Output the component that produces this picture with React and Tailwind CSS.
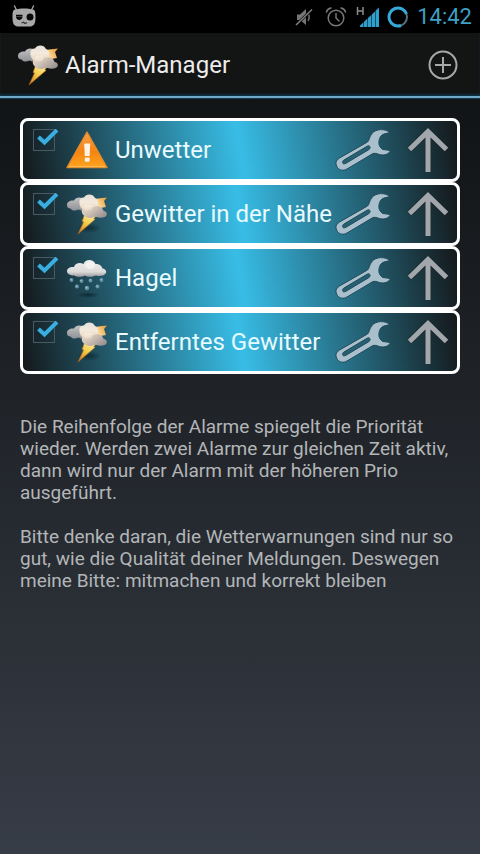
import React, { useState } from "react";

const initialAlarms = [
  { id: "storm", title: "Unwetter", icon: "warning", active: true },
  { id: "near", title: "Gewitter in der Nähe", icon: "thunder", active: true },
  { id: "hail", title: "Hagel", icon: "hail", active: true },
  { id: "far", title: "Entferntes Gewitter", icon: "thunder", active: true },
];

const WarningIcon = () => (
  <svg viewBox="0 0 42 40" className="w-full" aria-hidden="true">
    <defs>
      <linearGradient id="warnFill" x1="0" y1="0" x2="0" y2="1">
        <stop offset="0" stopColor="#f9a04a" />
        <stop offset="0.55" stopColor="#f58412" />
        <stop offset="1" stopColor="#ffa41f" />
      </linearGradient>
    </defs>
    <path
      d="M21 2 L41 37.5 H1 Z"
      fill="url(#warnFill)"
      stroke="#e08a2c"
      strokeWidth="1.4"
      strokeLinejoin="round"
    />
    <path d="M3 36.6 H39" stroke="#ffc05a" strokeWidth="1" />
    <path d="M18.2 13.5 H24.2 L23.6 26 H18.8 Z" fill="#fff3e6" />
    <rect x="18.8" y="27.5" width="4.8" height="4.2" rx="1" fill="#fff3e6" />
  </svg>
);

const ThunderIcon = () => (
  <svg viewBox="0 0 42 42" className="w-full" aria-hidden="true">
    <defs>
      <linearGradient id="boltFill" x1="0.8" y1="0" x2="0.2" y2="1">
        <stop offset="0" stopColor="#ffefb5" />
        <stop offset="0.5" stopColor="#f6d04f" />
        <stop offset="1" stopColor="#d9831f" />
      </linearGradient>
      <linearGradient id="cloudBack" x1="0" y1="0" x2="0" y2="1">
        <stop offset="0" stopColor="#c3c2c2" />
        <stop offset="1" stopColor="#8f9196" />
      </linearGradient>
      <linearGradient id="cloudTop" x1="0" y1="0" x2="0" y2="1">
        <stop offset="0" stopColor="#e4e0dc" />
        <stop offset="0.5" stopColor="#f5eadb" />
        <stop offset="1" stopColor="#e5d3c0" />
      </linearGradient>
      <linearGradient id="cloudLow" x1="0" y1="0" x2="1" y2="0.6">
        <stop offset="0" stopColor="#eedcc6" />
        <stop offset="0.5" stopColor="#cdbfb4" />
        <stop offset="1" stopColor="#9c9595" />
      </linearGradient>
      <linearGradient id="spark" x1="0" y1="0.5" x2="1" y2="0">
        <stop offset="0" stopColor="#ffedbf" />
        <stop offset="1" stopColor="#ea9228" />
      </linearGradient>
      <radialGradient id="boltShadow">
        <stop offset="0" stopColor="#0a1c22" stopOpacity="0.6" />
        <stop offset="1" stopColor="#0a1c22" stopOpacity="0" />
      </radialGradient>
    </defs>
    <ellipse cx="23" cy="35" rx="13" ry="5" fill="url(#boltShadow)" />
    <path d="M28 6 L41 4.5 L38 8 L40 14 L29 16 Z" fill="url(#spark)" />
    <path
      d="M1 12 C1 8.5 4.500 7 8 7.500 C10 4 14 4 17 5.500 L24 14 C20 18 15 18 12.500 16.500 C9 18.500 5.500 17.500 4.500 15.500 C2 15.500 1 14 1 12 Z"
      fill="url(#cloudBack)"
    />
    <path
      d="M19 20 L16 28.500 L17.500 29 L12 41 L29 26.500 L28 25.500 L33 20 Z"
      fill="url(#boltFill)"
      stroke="#a8641f"
      strokeWidth="0.6"
    />
    <path
      d="M13.500 10 C13 6.500 15 4.500 18 4.500 C20 0.500 27 0.500 29 5 C32 6 33 10 31.500 12.500 L28 17 H18 C15 16 13.500 13 13.500 10 Z"
      fill="url(#cloudTop)"
    />
    <path
      d="M17 15.500 C21 13.500 26 15 28 14 C32 12 37 14.500 37.500 18 C41 18.500 42 22 39.500 23.500 C36 25.500 31 24.500 29.500 23.500 C26 25.500 20 25.500 18 22.500 C15.500 20.500 15 17.500 17 15.500 Z"
      fill="url(#cloudLow)"
    />
    <ellipse cx="22" cy="14.500" rx="4.500" ry="3" fill="#fbf1e2" opacity="0.5" />
  </svg>
);

const HailIcon = () => (
  <svg viewBox="0 0 42 42" className="w-full" aria-hidden="true">
    <defs>
      <linearGradient id="hailCloud" x1="0" y1="0" x2="0" y2="1">
        <stop offset="0" stopColor="#ededed" />
        <stop offset="0.7" stopColor="#dddbda" />
        <stop offset="1" stopColor="#9a9b9d" />
      </linearGradient>
      <radialGradient id="hailShadow">
        <stop offset="0" stopColor="#0b2730" stopOpacity="0.9" />
        <stop offset="1" stopColor="#0b2730" stopOpacity="0" />
      </radialGradient>
    </defs>
    <ellipse cx="22" cy="38" rx="12" ry="3" fill="url(#hailShadow)" />
    <path
      d="M1 14 C1 11 5 9.500 8 10 C9 6 14 5 17.500 7 C19 1.500 27.500 1.500 29.500 7 C33 6.500 36 9 36.500 11.500 C40.500 12 41.500 16 38.500 17.500 C36 19.500 31 19 29.500 18.500 C26 20.500 21 20 19 18.500 C15.500 20.500 10 20 8.500 18.500 C4 18.500 1 17 1 14 Z"
      fill="url(#hailCloud)"
    />
    <ellipse cx="24" cy="8.500" rx="5" ry="3.500" fill="#fff" opacity="0.5" />
    <g fill="#6392a8">
      <circle cx="5.500" cy="23" r="1.900" />
      <circle cx="15.500" cy="24" r="1.900" />
      <circle cx="24.500" cy="23.500" r="1.900" />
      <circle cx="35.500" cy="23" r="1.900" />
      <circle cx="11" cy="29.500" r="2" />
      <circle cx="21" cy="31" r="2.200" />
      <circle cx="31.500" cy="29.500" r="2" />
    </g>
    <g fill="#a3c3d1">
      <circle cx="5" cy="22.500" r="0.700" />
      <circle cx="15" cy="23.500" r="0.700" />
      <circle cx="24" cy="23" r="0.700" />
      <circle cx="35" cy="22.500" r="0.700" />
      <circle cx="10.500" cy="29" r="0.800" />
      <circle cx="20.500" cy="30.500" r="0.900" />
      <circle cx="31" cy="29" r="0.800" />
    </g>
  </svg>
);

const WrenchIcon = () => (
  <svg viewBox="0 0 56 44" className="w-full" aria-hidden="true">
    <path
      d="M55 4.500 C50 0.500 41 0.500 37 5.500 C34 9 34.500 12.500 32.500 14 L4.500 30 C0.500 32.500 0 36 2.500 39.500 C4.500 42.500 8.500 43 12 41 L38 25.500 C41 24.500 43.500 27 47.500 27 C51.500 27 54.500 25 55.500 22.500 L48 21.500 C44.500 19.500 43.500 16.500 44 13 C44.500 9 46.500 6.500 49 6 Z"
      fill="#a9bfcb"
      stroke="#1f4a5b"
      strokeWidth="1"
      strokeLinejoin="round"
    />
    <path
      d="M32.500 18 L9 32 C6.500 33.500 7.500 37 10.500 35.500 L34 21.500 C36 20 35 17 32.500 18 Z"
      fill="#286073"
      stroke="#1d4757"
      strokeWidth="1"
    />
  </svg>
);

const ArrowUpIcon = () => (
  <svg viewBox="0 0 42 46" className="w-full" aria-hidden="true">
    <g fill="none" strokeLinejoin="miter">
      <path
        d="M21 45 V5 M2 23 L21 4.500 L40 23"
        stroke="#20282c"
        strokeWidth="7"
        opacity="0.5"
      />
      <path
        d="M21 45 V5 M2.500 22.500 L21 4.500 L39.500 22.500"
        stroke="#a1a7aa"
        strokeWidth="5"
      />
    </g>
  </svg>
);

const alarmIcons = {
  warning: WarningIcon,
  thunder: ThunderIcon,
  hail: HailIcon,
};

const StatusBar = () => (
  <div className="flex h-[33px] items-center bg-black pl-3 pr-2">
    <svg viewBox="0 0 24 24" className="h-6 w-6" aria-hidden="true">
      <path
        d="M2.500 1 L4.500 5 M21.500 1 L19.500 5"
        stroke="#9b9b9b"
        strokeWidth="1.500"
        strokeLinecap="round"
      />
      <path
        d="M3 4.500 C8 3 16 3 21 4.500 C23 5 23.500 7 23.500 12 C23.500 19 22 21.500 17 21.500 H7 C2 21.500 0.500 19 0.500 12 C0.500 7 1 5 3 4.500 Z"
        fill="#a9a9a9"
      />
      <path d="M4 11.500 H10.500 C10.500 16 4 16 4 11.500 Z" fill="#0a0a0a" />
      <path d="M4 10.500 H10.500" stroke="#0a0a0a" strokeWidth="1.500" />
      <circle cx="18" cy="12" r="3.500" fill="#0a0a0a" />
      <path
        d="M9.500 18 L11.500 17.300 L13 18.500 L15 17.500"
        stroke="#333"
        strokeWidth="1.200"
        fill="none"
      />
    </svg>

    <div className="ml-auto flex items-center gap-3">
      <svg viewBox="0 0 18 20" className="h-5 w-[18px]" aria-hidden="true">
        <path d="M2 7.500 H5 L11 2 V18 L5 13 H2 Z" fill="#757575" />
        <path
          d="M13 6.500 C14.500 8 14.500 12 13 14"
          stroke="#757575"
          strokeWidth="1.500"
          fill="none"
        />
        <path d="M16.500 3 L1 18" stroke="#000" strokeWidth="2.500" />
        <path d="M17 2.500 L1 18" stroke="#808080" strokeWidth="1.500" />
      </svg>
      <div className="flex items-center gap-2">
        <svg
          viewBox="0 0 22 22"
          className="h-[22px] w-[22px]"
          fill="none"
          stroke="#777"
          strokeWidth="1.500"
          strokeLinecap="round"
          aria-hidden="true"
        >
          <circle cx="11" cy="12" r="7.800" />
          <path d="M11 7.500 V12 L14 15" />
          <path d="M1.500 6 C2 4 3.500 2.500 6 2 M20.500 6 C20 4 18.500 2.500 16 2" />
        </svg>
        <svg viewBox="0 0 24 22" className="h-[22px] w-6" aria-hidden="true">
          <path
            d="M2.500 1 V9 M8 1 V9 M2.500 5 H8"
            stroke="#8a8a8a"
            strokeWidth="1.500"
            fill="none"
          />
          <g fill="#2f9fcb">
            <path d="M5 21 V19.500 L8.500 16.300 V21 Z" />
            <path d="M9 21 V15.800 L12.500 12.600 V21 Z" />
            <path d="M13 21 V12 L16.500 8.800 V21 Z" />
            <path d="M17 21 V8.200 L20 5.400 V21 Z" />
            <path d="M20.500 21 V4.800 L24 1.500 V21 Z" />
          </g>
        </svg>
        <svg
          viewBox="0 0 22 22"
          className="h-[22px] w-[22px]"
          fill="none"
          aria-hidden="true"
        >
          <circle cx="11" cy="11" r="9" stroke="#56707c" strokeWidth="2" />
          <path
            d="M14 19.500 A9 9 0 1 1 19.500 8"
            stroke="#35a9d8"
            strokeWidth="3"
          />
        </svg>
        <time className="text-[22px] leading-6 text-[#3f9fc4]">14:42</time>
      </div>
    </div>
  </div>
);

const AlarmRow = ({ alarm, onToggle, onMoveUp }) => {
  const Icon = alarmIcons[alarm.icon];

  return (
    <li className="flex h-16 items-center rounded-lg border-3 border-white bg-[linear-gradient(80deg,#14181a,#38bde6_50%,#14181a)] pl-[10px] pr-2">
      <div className="relative mt-2 h-[22px] w-[22px] shrink-0 self-start">
        <input
          id={alarm.id}
          type="checkbox"
          checked={alarm.active}
          onChange={() => onToggle(alarm.id)}
          className="peer block h-full w-full appearance-none border border-[#4a5a62]"
        />
        <svg
          viewBox="0 0 24 18"
          className="pointer-events-none absolute left-0.5 top-0 hidden w-6 peer-checked:block"
          fill="none"
          aria-hidden="true"
        >
          <path d="M3.500 8 L9.500 13.500 L22 1" stroke="#38afe0" strokeWidth="4" />
        </svg>
      </div>
      <label htmlFor={alarm.id} className="flex min-w-0 flex-1 items-center">
        <span className="ml-[11px] w-[42px] shrink-0">
          <Icon />
        </span>
        <span className="ml-[7px] whitespace-nowrap text-2xl text-[#e8fbff]">
          {alarm.title}
        </span>
      </label>
      <button
        type="button"
        aria-label={`${alarm.title} bearbeiten`}
        className="w-14 shrink-0"
      >
        <WrenchIcon />
      </button>
      <button
        type="button"
        aria-label={`${alarm.title} nach oben`}
        onClick={() => onMoveUp(alarm.id)}
        className="ml-4 w-[42px] shrink-0"
      >
        <ArrowUpIcon />
      </button>
    </li>
  );
};

const App = () => {
  const [alarms, setAlarms] = useState(initialAlarms);

  const onToggle = (id) => {
    setAlarms((prev) =>
      prev.map((a) => (a.id === id ? { ...a, active: !a.active } : a)),
    );
  };

  const onMoveUp = (id) => {
    setAlarms((prev) => {
      const ind = prev.findIndex((a) => a.id === id);
      if (ind < 1) return prev;
      const updated = [...prev];
      [updated[ind - 1], updated[ind]] = [updated[ind], updated[ind - 1]];
      return updated;
    });
  };

  return (
    <div className="flex min-h-screen flex-col bg-linear-to-b from-[#0d0f10] to-[#373d47] font-[Roboto,sans-serif]">
      <StatusBar />

      <header className="flex h-[65px] items-center border-b-2 border-[#6fa9c6] bg-[#131414] pl-[17px] pr-[22px] shadow-[0_1px_1px_#12384a,inset_0_-2px_2px_#0d3040]">
        <div className="w-[42px]">
          <ThunderIcon />
        </div>
        <h1 className="ml-1.5 text-2xl text-[#ececec]">Alarm-Manager</h1>
        <button
          type="button"
          aria-label="Alarm hinzufügen"
          className="ml-auto w-[30px]"
        >
          <svg
            viewBox="0 0 30 30"
            className="w-full"
            fill="none"
            stroke="#a8a8a8"
            strokeWidth="2"
            aria-hidden="true"
          >
            <circle cx="15" cy="15" r="13.500" />
            <path d="M15 7 V23 M7 15 H23" />
          </svg>
        </button>
      </header>

      <main className="px-5 pt-5">
        <ul>
          {alarms.map((alarm) => (
            <AlarmRow
              key={alarm.id}
              alarm={alarm}
              onToggle={onToggle}
              onMoveUp={onMoveUp}
            />
          ))}
        </ul>

        <div className="mt-[42px] space-y-[22px] text-[19px] leading-[22px] text-[#b3b6b8]">
          <p>
            Die Reihenfolge der Alarme spiegelt die Priorität wieder. Werden
            zwei Alarme zur gleichen Zeit aktiv, dann wird nur der Alarm mit der
            höheren Prio ausgeführt.
          </p>
          <p>
            Bitte denke daran, die Wetterwarnungen sind nur so gut, wie die
            Qualität deiner Meldungen. Deswegen meine Bitte: mitmachen und
            korrekt bleiben
          </p>
        </div>
      </main>
    </div>
  );
};

export default App;
